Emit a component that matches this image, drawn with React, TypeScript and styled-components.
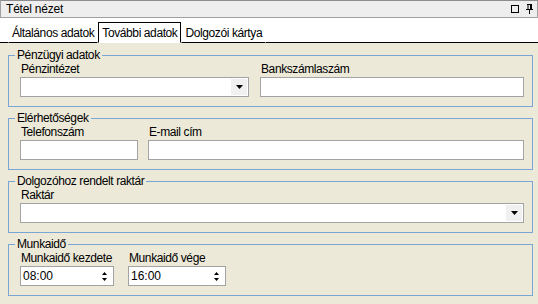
import React, { FC } from 'react';
import styled, { createGlobalStyle } from 'styled-components';

const GlobalStyle = createGlobalStyle`
  html, body {
    margin: 0;
    padding: 0;
    background: #ece9d8;
  }
  body {
    font-family: "Liberation Sans", Arial, sans-serif;
    font-size: 12px;
    letter-spacing: -0.4px;
    color: #000;
    white-space: nowrap;
  }
`;

const StyledWindow = styled.div`
  width: 538px;
  height: 304px;
  display: flex;
  flex-direction: column;
  background: #ece9d8;
  overflow: hidden;
`;

const StyledTitleBar = styled.div`
  height: 16px;
  display: flex;
  align-items: center;
  justify-content: space-between;
  padding: 0 4px 0 5px;
  background: #eeeeee;
  border: 1px solid #a0a0a0;
  border-top-color: #8c8c8c;
  letter-spacing: -0.2px;
`;

const StyledTitleIcons = styled.div`
  display: flex;
  align-items: center;
  gap: 7px;
`;

const StyledTabStrip = styled.div`
  height: 24px;
  display: flex;
  align-items: flex-end;
  padding-left: 8px;
  background: #fff;
  border-bottom: 1px solid #000;
`;

const StyledTab = styled.div<{ $active?: boolean }>`
  height: 19px;
  display: flex;
  align-items: center;
  padding: 0 3px;
  margin-bottom: -1px;
  background: #fff;
  border: 1px solid ${p => (p.$active ? '#000' : 'transparent')};
  border-bottom: 1px solid ${p => (p.$active ? '#fff' : '#000')};
`;

const StyledContent = styled.div`
  flex: 1;
  display: flex;
  flex-direction: column;
  gap: 4px;
  padding-top: 5px;
`;

const StyledGroup = styled.fieldset`
  margin: 0 5px 0 8px;
  padding: 0 8px 9px 11px;
  border: 1px solid #7aa6d6;
  min-width: 0;

  legend {
    margin-left: -5px;
    padding: 0 2px;
    line-height: 14px;
  }
`;

const StyledRow = styled.div<{ $cols: string; $gap: number }>`
  display: grid;
  grid-template-columns: ${p => p.$cols};
  column-gap: ${p => p.$gap}px;
`;

const StyledField = styled.div`
  display: flex;
  flex-direction: column;
  min-width: 0;

  label {
    line-height: 14px;
    height: 14px;
    padding-left: 1px;
  }
`;

const StyledInput = styled.div`
  height: 18px;
  margin-top: 1px;
  display: flex;
  align-items: center;
  background: #fff;
  border: 1px solid #a3a3a3;
  padding-left: 2px;
  letter-spacing: 0;
`;

const StyledValue = styled.span`
  flex: 1;
`;

const StyledDropButton = styled.div`
  width: 16px;
  height: 16px;
  margin-right: 1px;
  display: flex;
  align-items: center;
  justify-content: center;
  background: #f0f0f0;
`;

const StyledSpin = styled.div`
  width: 16px;
  height: 16px;
  margin-right: 1px;
  display: flex;
  flex-direction: column;
  align-items: center;
  justify-content: center;
  gap: 3px;
`;

const DownArrow: FC<{ w?: number }> = ({ w = 7 }) => (
  <svg width={w} height={Math.ceil(w / 2)} viewBox={`0 0 ${w} ${Math.ceil(w / 2)}`}>
    <polygon points={`0,0 ${w},0 ${w / 2},${Math.ceil(w / 2)}`} fill="#000" />
  </svg>
);

const UpArrow: FC<{ w?: number }> = ({ w = 5 }) => (
  <svg width={w} height={Math.ceil(w / 2)} viewBox={`0 0 ${w} ${Math.ceil(w / 2)}`}>
    <polygon points={`0,${Math.ceil(w / 2)} ${w},${Math.ceil(w / 2)} ${w / 2},0`} fill="#000" />
  </svg>
);

const Combo: FC = () => (
  <StyledInput>
    <StyledValue />
    <StyledDropButton>
      <DownArrow />
    </StyledDropButton>
  </StyledInput>
);

const TextBox: FC = () => (
  <StyledInput>
    <StyledValue />
  </StyledInput>
);

const Spinner: FC<{ value: string }> = ({ value }) => (
  <StyledInput>
    <StyledValue>{value}</StyledValue>
    <StyledSpin>
      <UpArrow />
      <DownArrow w={5} />
    </StyledSpin>
  </StyledInput>
);

const Field: FC<{ label: string; children: React.ReactNode }> = ({ label, children }) => (
  <StyledField>
    <label>{label}</label>
    {children}
  </StyledField>
);

const App: FC = () => (
  <StyledWindow>
    <GlobalStyle />
    <StyledTitleBar>
      <span>Tétel nézet</span>
      <StyledTitleIcons>
        <svg width="8" height="8" viewBox="0 0 8 8">
          <rect x="0.5" y="0.5" width="7" height="7" fill="none" stroke="#000" />
        </svg>
        <svg width="7" height="10" viewBox="0 0 7 10">
          <rect x="1" y="0" width="5" height="1" fill="#000" />
          <rect x="1.5" y="1" width="1" height="5" fill="#000" />
          <rect x="4" y="1" width="2" height="5" fill="#000" />
          <rect x="0" y="5" width="7" height="1" fill="#000" />
          <rect x="3" y="6" width="1" height="4" fill="#000" />
        </svg>
      </StyledTitleIcons>
    </StyledTitleBar>
    <StyledTabStrip>
      <StyledTab>Általános adatok</StyledTab>
      <StyledTab $active>További adatok</StyledTab>
      <StyledTab>Dolgozói kártya</StyledTab>
    </StyledTabStrip>
    <StyledContent>
      <StyledGroup>
        <legend>Pénzügyi adatok</legend>
        <StyledRow $cols="229px 1fr" $gap={11}>
          <Field label="Pénzintézet"><Combo /></Field>
          <Field label="Bankszámlaszám"><TextBox /></Field>
        </StyledRow>
      </StyledGroup>
      <StyledGroup>
        <legend>Elérhetőségek</legend>
        <StyledRow $cols="118px 1fr" $gap={10}>
          <Field label="Telefonszám"><TextBox /></Field>
          <Field label="E-mail cím"><TextBox /></Field>
        </StyledRow>
      </StyledGroup>
      <StyledGroup>
        <legend>Dolgozóhoz rendelt raktár</legend>
        <StyledRow $cols="1fr" $gap={0}>
          <Field label="Raktár"><Combo /></Field>
        </StyledRow>
      </StyledGroup>
      <StyledGroup>
        <legend>Munkaidő</legend>
        <StyledRow $cols="94px 98px" $gap={14}>
          <Field label="Munkaidő kezdete"><Spinner value="08:00" /></Field>
          <Field label="Munkaidő vége"><Spinner value="16:00" /></Field>
        </StyledRow>
      </StyledGroup>
    </StyledContent>
  </StyledWindow>
);

export default App;
